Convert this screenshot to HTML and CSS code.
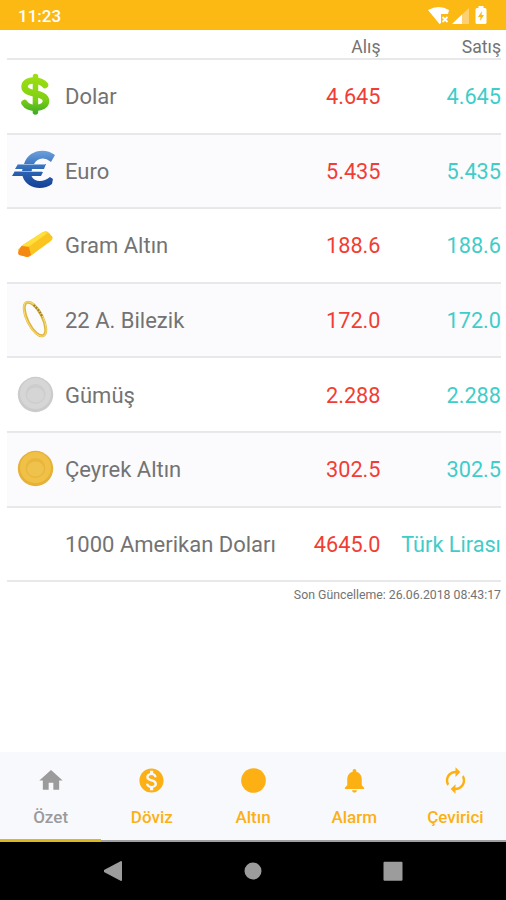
FILE: index.html
```html
<!DOCTYPE html>
<html lang="tr">

<head>
    <meta charset="UTF-8">
    <meta name="viewport" content="width=device-width, initial-scale=1.0">
    <title>Özet</title>
    <link rel="stylesheet" href="styles.css">
</head>

<body>
    <div class="status">
        <span class="time">11:23</span>
        <svg class="signals" width="60" height="20" viewBox="0 0 60 20">
            <path fill="#fff" d="M0 4Q11-2 21 4L20 8H13V17L11.500 18Z" />
            <path stroke="#fff" stroke-width="1.800" d="M14.500 11l5 5m0-5l-5 5" />
            <path fill="#fdd173" d="M41 2V18H24Z" />
            <path fill="#fff" d="M34 8.500V18H24Z" />
            <path fill="#fff" d="M50.500 0h5v2h1.500q1.500 0 1.500 1.500v13q0 1.500-1.500 1.500h-8q-1.500 0-1.500-1.500v-13Q47.500 2 49 2h1.500z" />
            <path fill="#fcb813" d="M54 5l-4 6h2.500l-.5 4 4-6h-2.500z" />
        </svg>
    </div>

    <div class="content">
        <div class="row head">
            <span class="name"></span>
            <span class="buy">Alış</span>
            <span class="sell">Satış</span>
        </div>
        <div class="row">
            <svg class="icon" viewBox="0 0 50 50">
                <defs>
                    <linearGradient id="green" gradientUnits="userSpaceOnUse" x1="0" y1="4" x2="0" y2="46">
                        <stop offset="0" stop-color="#a0e012" />
                        <stop offset=".6" stop-color="#7fd013" />
                        <stop offset="1" stop-color="#35a52b" />
                    </linearGradient>
                </defs>
                <g fill="none" stroke="url(#green)" stroke-linecap="round" stroke-linejoin="round">
                    <path stroke-width="6.500" d="M35 15C32 10 15 7.500 14.500 16.500C14.500 26 36 21 36 31C35.500 40 18 39.500 14.500 33" />
                    <path stroke-width="5.500" d="M25.500 6.500L25.400 42" />
                </g>
            </svg>
            <span class="name">Dolar</span>
            <span class="buy">4.645</span>
            <span class="sell">4.645</span>
        </div>
        <div class="row alt">
            <svg class="icon" viewBox="0 0 50 50">
                <defs>
                    <linearGradient id="blue" gradientUnits="userSpaceOnUse" x1="0" y1="6" x2="0" y2="44">
                        <stop offset="0" stop-color="#6b9edb" />
                        <stop offset=".5" stop-color="#2d67b5" />
                        <stop offset="1" stop-color="#143e94" />
                    </linearGradient>
                </defs>
                <path fill="url(#blue)" d="M45 10L41 17C34 11 27 13 24 19H36L34 24H22L21.500 27H33L31 31H21.500C24 37 33 38 40 32L43 34L42 39C33 46 16 44 12.500 31H2L5 26H12L12.500 24H5L8 19H14C18 5 35 2 45 10Z" />
                <path stroke="#a7c6e9" stroke-width=".8" d="M8 19.500h27M5 26.500h27" />
            </svg>
            <span class="name">Euro</span>
            <span class="buy">5.435</span>
            <span class="sell">5.435</span>
        </div>
        <div class="row">
            <svg class="icon" viewBox="0 0 50 50">
                <path fill="#fdc91f" d="M8 30.500L12 26.500L33 13Q36 11.500 38 13L42.500 18Q43 20 41 22L21 36.500L17 38L10 36Z" />
                <path fill="#ffdf3c" d="M12 26.500L33 13L38 13.500L19 27.500Z" />
                <path fill="#fac421" d="M19 28L39 14L42.500 19L21 36.500Z" />
                <path fill="#f58a12" d="M11.500 27L19 28L21 36Q19 38.500 17 38L9 36Q7.500 34.500 8.500 32Z" />
            </svg>
            <span class="name">Gram Altın</span>
            <span class="buy">188.6</span>
            <span class="sell">188.6</span>
        </div>
        <div class="row alt">
            <svg class="icon" viewBox="0 0 50 50">
                <g fill="none" transform="rotate(-27 25 25)">
                    <ellipse cx="25" cy="25" rx="7.500" ry="18.500" stroke="#dfb63b" stroke-width="3" />
                    <ellipse cx="25" cy="25" rx="8" ry="19" stroke="#f7df79" stroke-width="1" />
                    <path stroke="#9b8030" stroke-width="2" stroke-dasharray="2 1" d="M30 12Q33 18 32.500 27" />
                </g>
            </svg>
            <span class="name">22 A. Bilezik</span>
            <span class="buy">172.0</span>
            <span class="sell">172.0</span>
        </div>
        <div class="row">
            <svg class="icon" viewBox="0 0 50 50">
                <circle cx="25.500" cy="25.500" r="17.700" fill="#cbcbcb" />
                <circle cx="25.500" cy="24.500" r="15.500" fill="#d6d6d6" />
                <circle cx="25.500" cy="25" r="10" fill="#cdcdcd" />
                <ellipse cx="25.500" cy="26" rx="8.500" ry="7.500" fill="#d5d5d5" />
            </svg>
            <span class="name">Gümüş</span>
            <span class="buy">2.288</span>
            <span class="sell">2.288</span>
        </div>
        <div class="row alt">
            <svg class="icon" viewBox="0 0 50 50">
                <circle cx="25.500" cy="25.500" r="17.700" fill="#e5b136" />
                <circle cx="25.500" cy="24.500" r="15.500" fill="#f0c146" />
                <circle cx="25.500" cy="25" r="10" fill="#e8b63c" />
                <ellipse cx="25.500" cy="26" rx="8.500" ry="7.500" fill="#efc24d" />
            </svg>
            <span class="name">Çeyrek Altın</span>
            <span class="buy">302.5</span>
            <span class="sell">302.5</span>
        </div>
        <div class="row">
            <span class="icon"></span>
            <span class="name">1000 Amerikan Doları</span>
            <span class="buy">4645.0</span>
            <span class="sell">Türk Lirası</span>
        </div>
        <p class="update">Son Güncelleme: 26.06.2018 08:43:17</p>
    </div>

    <div class="tabs">
        <div class="tab current">
            <svg width="28" height="28" viewBox="0 0 24 24"><path d="M10 20v-6h4v6h5v-8h3L12 3 2 12h3v8z" /></svg>
            <span>Özet</span>
        </div>
        <div class="tab">
            <svg width="29" height="29" viewBox="0 0 24 24"><path d="M12 2C6.480 2 2 6.480 2 12s4.480 10 10 10 10-4.480 10-10S17.520 2 12 2zm1.410 16.090V20h-2.670v-1.930c-1.710-.36-3.160-1.460-3.270-3.400h1.960c.1 1.050.82 1.870 2.650 1.870 1.960 0 2.400-.98 2.400-1.590 0-.83-.44-1.610-2.670-2.140-2.480-.6-4.180-1.620-4.180-3.670 0-1.720 1.390-2.840 3.110-3.210V4h2.670v1.950c1.860.45 2.790 1.860 2.850 3.390H14.300c-.05-1.110-.64-1.870-2.220-1.870-1.500 0-2.400.68-2.400 1.640 0 .84.65 1.390 2.670 1.910s4.180 1.390 4.180 3.910c-.01 1.830-1.380 2.830-3.120 3.160z" /></svg>
            <span>Döviz</span>
        </div>
        <div class="tab">
            <svg width="29" height="29" viewBox="0 0 24 24"><circle cx="12" cy="12" r="10.200" /></svg>
            <span>Altın</span>
        </div>
        <div class="tab">
            <svg width="29" height="29" viewBox="0 0 24 24"><path d="M12 22c1.100 0 2-.9 2-2h-4c0 1.100.89 2 2 2zm6-6v-5c0-3.070-1.640-5.640-4.500-6.320V4c0-.83-.67-1.500-1.500-1.500s-1.500.67-1.500 1.500v.68C7.630 5.360 6 7.920 6 11v5l-2 2v1h16v-1l-2-2z" /></svg>
            <span>Alarm</span>
        </div>
        <div class="tab">
            <svg width="29" height="29" viewBox="0 0 24 24"><path d="M12 6v3l4-4-4-4v3c-4.420 0-8 3.580-8 8 0 1.570.46 3.030 1.240 4.260L6.700 14.800c-.45-.83-.7-1.790-.7-2.800 0-3.310 2.690-6 6-6zm6.760 1.740L17.300 9.200c.44.84.7 1.790.7 2.800 0 3.310-2.690 6-6 6v-3l-4 4 4 4v-3c4.420 0 8-3.580 8-8 0-1.570-.46-3.030-1.240-4.260z" /></svg>
            <span>Çevirici</span>
        </div>
    </div>

    <div class="navbar">
        <svg width="20" height="22" viewBox="0 0 20 22"><path d="M18 1q1 0 1 1v18q0 1-1 1L1 12v-2z" /></svg>
        <svg width="20" height="22" viewBox="0 0 20 22"><circle cx="10" cy="11" r="8.500" /></svg>
        <svg width="20" height="22" viewBox="0 0 20 22"><rect x=".5" y="1.700" width="19" height="19" rx="1" /></svg>
    </div>
</body>

</html>
```
FILE: styles.css
```css
* {
    box-sizing: border-box;
    margin: 0;
    padding: 0;
}

body {
    display: flex;
    flex-direction: column;
    width: 506px;
    height: 900px;
    overflow: hidden;
    background-color: #fff;
    color: #737373;
    font-family: Roboto, sans-serif;
}

.status {
    display: flex;
    justify-content: space-between;
    height: 30px;
    padding: 6px 18px 0;
    background-color: #fcb813;
    color: #fff;
}

.time {
    font-size: 17px;
    font-weight: 500;
    line-height: 21px;
}

.content {
    flex: 1;
    padding: 0 5px 0 7px;
}

.row {
    display: flex;
    align-items: center;
    height: 74.6px;
    padding-top: 1px;
    border-bottom: 2px solid #e8e8ea;
    font-size: 22px;
    white-space: nowrap;
}

.alt {
    background-color: #fbfbfe;
}

.head {
    height: 30px;
    padding-top: 5px;
    font-size: 17.6px;
}

.icon {
    flex: none;
    width: 50px;
    height: 50px;
    margin: -3px 5px 0 3px;
}

.name {
    flex: 1;
}

.buy,
.sell {
    text-align: right;
}

.row:not(.head) .buy,
.row:not(.head) .sell {
    font-size: 21.7px;
}

.row:not(.head) .buy {
    color: #f23d35;
}

.sell {
    width: 120.5px;
}

.row:not(.head) .sell {
    color: #3fcdc9;
}

.update {
    padding-top: 5px;
    font-size: 12.3px;
    line-height: 17px;
    text-align: right;
}

.tabs {
    display: flex;
    height: 90px;
    border-bottom: 2px solid #a0a0a0;
    background-color: #f8f9fc;
    color: #fcb013;
    fill: #fcb013;
}

.tab {
    display: flex;
    flex: 1;
    flex-direction: column;
    align-items: center;
    height: 90px;
    padding-top: 14px;
    font-size: 17px;
    font-weight: 500;
}

.tab svg {
    height: 29px;
}

.tab span {
    margin-top: 12px;
    line-height: 20px;
}

.current {
    border-bottom: 3px solid #dcb91c;
    color: #9b9b9b;
    fill: #9b9b9b;
}

.navbar {
    display: flex;
    justify-content: center;
    gap: 120px;
    height: 58px;
    padding-top: 18px;
    background-color: #000;
    fill: #9c9c9c;
}
```
